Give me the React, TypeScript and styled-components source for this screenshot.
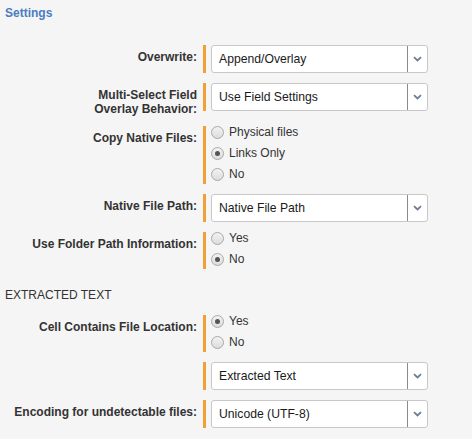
import styled, { createGlobalStyle } from "styled-components";

const GlobalStyle = createGlobalStyle`
  body {
    margin: 0;
    background-color: #f5f5f5;
    font-family: "Liberation Sans", Arial, sans-serif;
    color: #333;
  }
`;

const Page = styled.div`
  padding: 6px 5px 0;
`;

const Title = styled.h3`
  margin: 0 0 25px;
  font-size: 12px;
  line-height: 14px;
  font-weight: 700;
  color: #4a7cc2;
`;

const FieldList = styled.div`
  display: flex;
  flex-direction: column;
  gap: 10px;
`;

const FieldRow = styled.div`
  display: grid;
  grid-template-columns: 192px 225px;
  column-gap: 6px;
  align-items: start;
`;

const Label = styled.label`
  padding-top: 5px;
  font-size: 12px;
  line-height: 14px;
  font-weight: 700;
  text-align: right;
  color: #333;
`;

const Field = styled.div`
  border-left: 3px solid #f0a035;
  padding-left: 5px;
  display: flex;
  flex-direction: column;
`;

const SelectBox = styled.div`
  box-sizing: border-box;
  height: 28px;
  width: 217px;
  display: flex;
  align-items: stretch;
  background: #fff;
  border: 1px solid #c8c8c8;
  border-radius: 3px;
`;

const SelectValue = styled.span`
  flex: 1;
  display: flex;
  align-items: center;
  padding-left: 7px;
  font-size: 12.2px;
  color: #1a1a1a;
`;

const SelectToggle = styled.span`
  width: 19px;
  border-left: 1px solid #8a8a8a;
  display: flex;
  align-items: center;
  justify-content: center;
`;

const RadioGroup = styled.div`
  margin-top: -5px;
  display: flex;
  flex-direction: column;
`;

const RadioOption = styled.label`
  height: 21px;
  display: flex;
  align-items: center;
  gap: 5px;
  font-size: 12px;
  color: #333;
  padding-top: 1px;
  box-sizing: border-box;
`;

const RadioInput = styled.input`
  appearance: none;
  margin: 0;
  box-sizing: border-box;
  width: 13px;
  height: 13px;
  border-radius: 50%;
  border: 1px solid #a9a9a9;
  background: linear-gradient(#f2f2f2, #dcdcdc);
  display: grid;
  place-items: center;

  &:checked::after {
    content: "";
    width: 5px;
    height: 5px;
    border-radius: 50%;
    background: #555;
  }
`;

const SectionHeading = styled.div`
  margin: 19px 0 13px;
  font-size: 12px;
  line-height: 14px;
  color: #333;
`;

function Chevron() {
  return (
    <svg width="9" height="6" viewBox="0 0 9 6">
      <path d="M1 1.2 L4.5 4.5 L8 1.2" fill="none" stroke="#6e7d95" strokeWidth="1.8" />
    </svg>
  );
}

function Select({ value }: { value: string }) {
  return (
    <SelectBox>
      <SelectValue>{value}</SelectValue>
      <SelectToggle>
        <Chevron />
      </SelectToggle>
    </SelectBox>
  );
}

function Radios({ name, options, checked }: { name: string; options: string[]; checked: string }) {
  return (
    <RadioGroup>
      {options.map((opt) => (
        <RadioOption key={opt}>
          <RadioInput type="radio" name={name} defaultChecked={opt === checked} />
          {opt}
        </RadioOption>
      ))}
    </RadioGroup>
  );
}

export default function App() {
  return (
    <Page>
      <GlobalStyle />
      <Title>Settings</Title>

      <FieldList>
        <FieldRow>
          <Label>Overwrite:</Label>
          <Field>
            <Select value="Append/Overlay" />
          </Field>
        </FieldRow>
        <FieldRow>
          <Label>
            Multi-Select Field
            <br />
            Overlay Behavior:
          </Label>
          <Field>
            <Select value="Use Field Settings" />
          </Field>
        </FieldRow>
        <FieldRow>
          <Label>Copy Native Files:</Label>
          <Field>
            <Radios name="copyNative" options={["Physical files", "Links Only", "No"]} checked="Links Only" />
          </Field>
        </FieldRow>
        <FieldRow>
          <Label>Native File Path:</Label>
          <Field>
            <Select value="Native File Path" />
          </Field>
        </FieldRow>
        <FieldRow>
          <Label>Use Folder Path Information:</Label>
          <Field>
            <Radios name="folderPath" options={["Yes", "No"]} checked="No" />
          </Field>
        </FieldRow>
      </FieldList>

      <SectionHeading>EXTRACTED TEXT</SectionHeading>

      <FieldList>
        <FieldRow>
          <Label>Cell Contains File Location:</Label>
          <Field>
            <Radios name="cellLocation" options={["Yes", "No"]} checked="Yes" />
          </Field>
        </FieldRow>
        <FieldRow>
          <Label />
          <Field>
            <Select value="Extracted Text" />
          </Field>
        </FieldRow>
        <FieldRow>
          <Label>Encoding for undetectable files:</Label>
          <Field>
            <Select value="Unicode (UTF-8)" />
          </Field>
        </FieldRow>
      </FieldList>
    </Page>
  );
}
